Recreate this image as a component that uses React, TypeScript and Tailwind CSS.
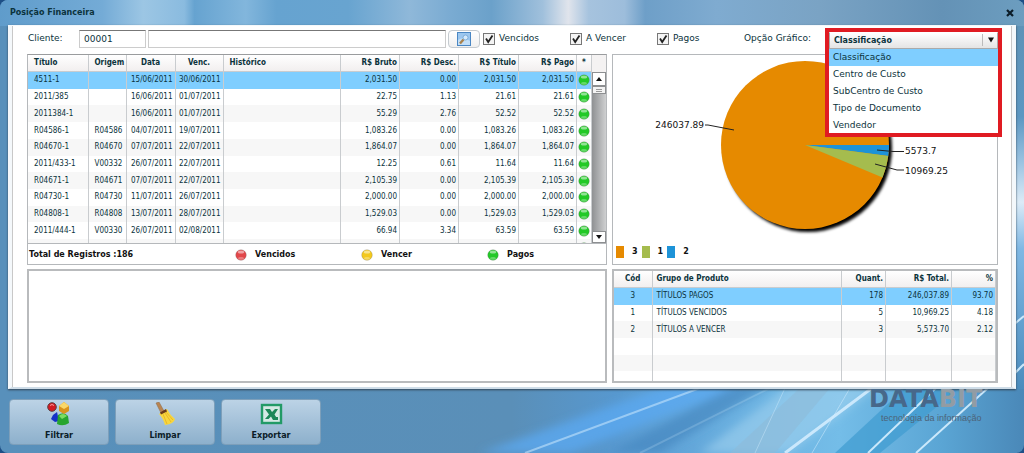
import { useState } from "react";

const titulos = [
  ["4511-1", "", "15/06/2011", "30/06/2011", "2,031.50", "0.00", "2,031.50", "2,031.50"],
  ["2011/385", "", "16/06/2011", "01/07/2011", "22.75", "1.13", "21.61", "21.61"],
  ["2011384-1", "", "16/06/2011", "01/07/2011", "55.29", "2.76", "52.52", "52.52"],
  ["R04586-1", "R04586", "04/07/2011", "19/07/2011", "1,083.26", "0.00", "1,083.26", "1,083.26"],
  ["R04670-1", "R04670", "07/07/2011", "22/07/2011", "1,864.07", "0.00", "1,864.07", "1,864.07"],
  ["2011/433-1", "V00332", "26/07/2011", "22/07/2011", "12.25", "0.61", "11.64", "11.64"],
  ["R04671-1", "R04671", "07/07/2011", "22/07/2011", "2,105.39", "0.00", "2,105.39", "2,105.39"],
  ["R04730-1", "R04730", "11/07/2011", "26/07/2011", "2,000.00", "0.00", "2,000.00", "2,000.00"],
  ["R04808-1", "R04808", "13/07/2011", "28/07/2011", "1,529.03", "0.00", "1,529.03", "1,529.03"],
  ["2011/444-1", "V00330", "26/07/2011", "02/08/2011", "66.94", "3.34", "63.59", "63.59"],
  ["", "", "", "", "", "", "", ""],
];

const grupos = [
  ["3", "TÍTULOS PAGOS", "178", "246,037.89", "93.70"],
  ["1", "TÍTULOS VENCIDOS", "5", "10,969.25", "4.18"],
  ["2", "TÍTULOS A VENCER", "3", "5,573.70", "2.12"],
  ["", "", "", "", ""],
  ["", "", "", "", ""],
  ["", "", "", "", ""],
];

const opcoes = ["Classificação", "Centro de Custo", "SubCentro de Custo", "Tipo de Documento", "Vendedor"];

const rowColor = (i: number) => {
  if (i === 0) return "bg-[#7fceff]";
  return i % 2 === 0 ? "bg-[#f7f7f7]" : "bg-white";
};

const Background = () => (
  <svg className="absolute inset-0 h-full w-full" viewBox="0 0 1024 453" preserveAspectRatio="none" aria-hidden="true">
    <defs>
      <linearGradient id="bar" x1="0" x2="1" y1="0" y2="0">
        <stop offset="0" stopColor="#5f9ccb" />
        <stop offset="0.1" stopColor="#74abd6" />
        <stop offset="0.14" stopColor="#9cc6e4" />
        <stop offset="0.18" stopColor="#8abbdf" />
        <stop offset="0.19" stopColor="#66a3d0" />
        <stop offset="0.24" stopColor="#82b6dc" />
        <stop offset="0.27" stopColor="#66a3d0" />
        <stop offset="0.34" stopColor="#68a4d0" />
        <stop offset="0.4" stopColor="#8fb8d9" />
        <stop offset="0.44" stopColor="#7aabd2" />
        <stop offset="0.48" stopColor="#6ba1ca" />
        <stop offset="0.53" stopColor="#a0c0dc" />
        <stop offset="0.555" stopColor="#e0e4ec" />
        <stop offset="0.575" stopColor="#a6c3de" />
        <stop offset="0.61" stopColor="#9dbddb" />
        <stop offset="0.63" stopColor="#6e9fc8" />
        <stop offset="0.7" stopColor="#7fabd0" />
        <stop offset="0.8" stopColor="#7aa3c4" />
        <stop offset="0.92" stopColor="#6492b6" />
        <stop offset="1" stopColor="#6c9dbf" />
      </linearGradient>
      <linearGradient id="floor" x1="0" x2="1" y1="0" y2="0">
        <stop offset="0" stopColor="#5890bb" />
        <stop offset="0.5" stopColor="#5a8fb8" />
        <stop offset="0.6" stopColor="#5798cf" />
        <stop offset="0.72" stopColor="#6ab0e0" />
        <stop offset="0.82" stopColor="#74bde8" />
        <stop offset="0.92" stopColor="#5aa5d4" />
        <stop offset="1" stopColor="#4a88b8" />
      </linearGradient>
      <linearGradient id="side" x1="0" x2="0" y1="0" y2="1">
        <stop offset="0" stopColor="#5f92b5" />
        <stop offset="0.3" stopColor="#5c97c2" />
        <stop offset="0.42" stopColor="#9cc4e2" />
        <stop offset="0.52" stopColor="#dcebf7" />
        <stop offset="0.64" stopColor="#7fb8e4" />
        <stop offset="1" stopColor="#4b8cbd" />
      </linearGradient>
      <filter id="soft">
        <feGaussianBlur stdDeviation="4" />
      </filter>
    </defs>
    <rect width="1024" height="453" fill="url(#floor)" />
    <rect x="1008" width="16" height="389" fill="url(#side)" />
    <rect width="1024" height="26" fill="url(#bar)" />
    <g filter="url(#soft)">
      <path d="M480 453L670 385H745L570 453Z" fill="#5ba9f2" opacity="0.75" />
      <path d="M610 453L735 385H770L660 453Z" fill="#4788c0" opacity="0.7" />
      <path d="M700 453L790 385H880L790 453Z" fill="#9fd0ee" opacity="0.6" />
    </g>
    <path d="M730 453L800 388H830L775 453Z" fill="#8dbad8" opacity="0.6" />
    <path d="M835 453L905 388H960L880 453Z" fill="#3f9bd0" opacity="0.7" />
    <g stroke="#d7efff" fill="none">
      <path d="M525 453L700 388" strokeWidth="2" opacity="0.5" />
      <path d="M640 453L770 388" strokeWidth="2" opacity="0.2" />
      <path d="M755 453L785 388" opacity="0.4" />
      <path d="M785 453L872 388" strokeWidth="3" opacity="0.85" />
      <path d="M812 453L850 388" opacity="0.5" />
      <path d="M868 453L936 388" strokeWidth="2" opacity="0.9" />
      <path d="M916 453L988 388" strokeWidth="2" opacity="0.9" />
      <path d="M1012 326L1024 316" strokeWidth="2" opacity="0.9" />
      <path d="M1012 376L1024 364" strokeWidth="2" opacity="0.9" />
    </g>
  </svg>
);

const Ball = ({ color }: { color: "red" | "yellow" | "green" }) => {
  const fill = { red: "#e2474a", yellow: "#f3c91d", green: "#22c926" }[color];
  return (
    <svg className="block h-3 w-3" viewBox="0 0 12 12" aria-hidden="true">
      <circle cx="6" cy="6" r="5.3" fill={fill} stroke="#777" strokeOpacity="0.5" strokeWidth="0.6" />
      <ellipse cx="6" cy="3" rx="3.2" ry="1.6" fill="#fff" opacity="0.5" />
      <ellipse cx="6" cy="9.4" rx="3" ry="1.4" fill="#fff" opacity="0.3" />
    </svg>
  );
};

const FilterIcon = () => (
  <svg className="h-6 w-6" viewBox="0 0 24 24" aria-hidden="true">
    <path d="M6 13L10 10L12 19L8 20L4 17Z" fill="#1532c8" />
    <path d="M11 13Q17 9 21 14L22 21Q16 25 10 22Z" fill="#27a52f" />
    <path d="M12 14Q16 10 20 14L15 17Z" fill="#7bdc62" />
    <circle cx="5" cy="5" r="4.3" fill="#d31b22" stroke="#5d4143" />
    <path d="M3 3.500Q5 1.500 7 3.500" stroke="#f8a0a0" fill="none" />
    <path d="M17 0L22 4V9L17 12L12 9V4Z" fill="#d9931c" />
    <path d="M17 0L22 4L17 7L12 4Z" fill="#f9d76a" />
  </svg>
);

const BroomIcon = () => (
  <svg className="h-6 w-6" viewBox="0 0 24 24" aria-hidden="true">
    <path d="M3 1L6 0L11 9L8 11Z" fill="#b98450" stroke="#8a6a4c" strokeWidth="0.5" />
    <path d="M6 12L14 7Q17 13 22 17Q21 22 12 23Q10 16 6 12Z" fill="#f8d63e" />
    <path d="M10 12L14 22M12 11L18 20M13 10L20 18" stroke="#e3ab22" strokeWidth="0.7" />
    <path d="M7 10.500L13 7L14 9.500L8 12.500Z" fill="#6a3a1a" />
  </svg>
);

const ExcelIcon = () => (
  <svg className="h-6 w-6" viewBox="0 0 24 24" aria-hidden="true">
    <rect x="3" y="3" width="19" height="18" fill="#d5e9e4" stroke="#229a66" strokeWidth="2.400" />
    <path d="M6 7H11L13 10L16 7H19L15.500 12.500L19 18H14L12 14.500L9.500 17H6L10 12.500Z" fill="#1d8758" />
    <path d="M15 15H19V18H15Z" fill="#1d8758" />
  </svg>
);

const Check = ({ label }: { label: string }) => {
  const [on, setOn] = useState(true);
  return (
    <label className="flex w-[87px] shrink-0 items-center gap-1">
      <span className="relative block h-3 w-3">
        <input
          type="checkbox"
          checked={on}
          onChange={() => setOn(!on)}
          className="block h-3 w-3 appearance-none border border-[#777] bg-[#f4f4f4]"
        />
        {on && (
          <svg className="pointer-events-none absolute inset-0 h-3 w-3" viewBox="0 0 12 12" aria-hidden="true">
            <path d="M3 5.500L5.200 9L9.500 2.500" fill="none" stroke="#222" strokeWidth="1.800" />
          </svg>
        )}
      </span>
      {label}
    </label>
  );
};

const TitulosTable = () => (
  <div className="flex h-[190px] overflow-hidden border border-[#b5b8bb] border-t-[#9a9c9e]">
    <div className="h-full min-w-0 flex-1 overflow-hidden">
      <table className="h-[201px] w-full table-fixed border-collapse font-['DejaVu_Sans_Condensed','DejaVu_Sans',sans-serif] text-[8px] leading-4">
        <colgroup>
          <col className="w-[60px]" />
          <col className="w-[38px]" />
          <col className="w-[49px]" />
          <col className="w-[48px]" />
          <col />
          <col className="w-[59px]" />
          <col className="w-[59px]" />
          <col className="w-[60px]" />
          <col className="w-[58px]" />
          <col className="w-[15px]" />
        </colgroup>
        <thead>
          <tr className="h-4 bg-linear-to-b from-white to-[#f1eeee] [&>th]:border-r [&>th]:border-b [&>th]:border-[#c9cccf] [&>th]:p-0">
            <th className="pl-1.5! text-left">Título</th>
            <th className="pl-1.5! text-left">Origem</th>
            <th>Data</th>
            <th>Venc.</th>
            <th className="pl-1.5! text-left">Histórico</th>
            <th className="pr-0.5! text-right">R$ Bruto</th>
            <th className="pr-0.5! text-right">R$ Desc.</th>
            <th className="pr-0.5! text-right">R$ Título</th>
            <th className="pr-0.5! text-right">R$ Pago</th>
            <th>*</th>
          </tr>
        </thead>
        <tbody>
          {titulos.map((t, i) => (
            <tr key={i} className={`${rowColor(i)} h-4 [&>td]:border-r [&>td]:border-[#c9cccf] [&>td]:p-0`}>
              <td className="pl-1.5!">{t[0]}</td>
              <td className="pl-1.5!">{t[1]}</td>
              <td className="pr-0.5! text-right">{t[2]}</td>
              <td className="pr-0.5! text-right">{t[3]}</td>
              <td></td>
              <td className="pr-0.5! text-right">{t[4]}</td>
              <td className="pr-0.5! text-right">{t[5]}</td>
              <td className="pr-0.5! text-right">{t[6]}</td>
              <td className="pr-0.5! text-right">{t[7]}</td>
              <td className="pl-px!"><Ball color="green" /></td>
            </tr>
          ))}
        </tbody>
      </table>
    </div>
    <div className="flex w-3.5 flex-col">
      <div className="h-[17px] bg-[#f4f2f2]"></div>
      <button aria-label="Subir" className="flex h-3.5 items-center justify-center border border-[#8d8f91] bg-white">
        <svg className="h-1 w-1.5" viewBox="0 0 6 4"><path d="M0 4L3 0L6 4Z" fill="#111" /></svg>
      </button>
      <div className="flex-1 bg-linear-to-r from-[#8f9193] to-[#cfd0d1]">
        <div className="flex h-2 flex-col items-center justify-center gap-px border border-[#8d8f91] bg-[#f3f3f3]">
          <span className="h-px w-1.5 bg-[#999]"></span>
          <span className="h-px w-1.5 bg-[#999]"></span>
        </div>
      </div>
      <button aria-label="Descer" className="flex h-3 items-center justify-center border border-[#8d8f91] bg-white">
        <svg className="h-1 w-1.5" viewBox="0 0 6 4"><path d="M0 0L3 4L6 0Z" fill="#111" /></svg>
      </button>
    </div>
  </div>
);

const GruposTable = () => (
  <div className="h-[114px] overflow-hidden border-2 border-[#b9bbbd]">
    <table className="h-[117px] w-full table-fixed border-collapse font-['DejaVu_Sans_Condensed','DejaVu_Sans',sans-serif] text-[8px] leading-4">
      <colgroup>
        <col className="w-[38px]" />
        <col />
        <col className="w-[44px]" />
        <col className="w-[66px]" />
        <col className="w-[44px]" />
      </colgroup>
      <thead>
        <tr className="h-4 bg-linear-to-b from-white to-[#f1eeee] [&>th]:border-r [&>th]:border-b [&>th]:border-[#c9cccf] [&>th]:p-0">
          <th>Cód</th>
          <th className="pl-1! text-left">Grupo de Produto</th>
          <th className="pr-0.5! text-right">Quant.</th>
          <th className="pr-0.5! text-right">R$ Total.</th>
          <th className="pr-0.5! text-right">%</th>
        </tr>
      </thead>
      <tbody>
        {grupos.map((g, i) => (
          <tr key={i} className={`${rowColor(i)} h-4 [&>td]:border-r [&>td]:border-[#c9cccf] [&>td]:p-0`}>
            <td className="text-center">{g[0]}</td>
            <td className="pl-1!">{g[1]}</td>
            <td className="pr-0.5! text-right">{g[2]}</td>
            <td className="pr-0.5! text-right">{g[3]}</td>
            <td className="pr-0.5! text-right">{g[4]}</td>
          </tr>
        ))}
      </tbody>
    </table>
  </div>
);

const PieChart = () => (
  <svg className="h-[189px] w-full" viewBox="0 0 384 189" role="img" aria-label="Gráfico por classificação">
    <defs>
      <filter id="shadow" x="-10%" y="-10%" width="120%" height="120%">
        <feGaussianBlur stdDeviation="1.500" />
      </filter>
    </defs>
    <circle cx="195" cy="93" r="84" fill="#000" filter="url(#shadow)" />
    <circle cx="192" cy="90" r="84" fill="#e68a00" />
    <path d="M192 90H276A84 84 0 0 1 275.300 101.100Z" fill="#1d93d8" />
    <path d="M192 90L275.300 101.100A84 84 0 0 1 269.500 122.500Z" fill="#a5bc4e" />
    <g stroke="#222" fill="none">
      <path d="M92 70H95L121 75" />
      <path d="M264 95L280 96.500H291" />
      <path d="M262 109L284 115H291" />
    </g>
    <g className="fill-[#111] text-[9px]">
      <text x="91" y="73" textAnchor="end">246037.89</text>
      <text x="292" y="99">5573.7</text>
      <text x="292" y="119">10969.25</text>
    </g>
  </svg>
);

const App = () => {
  const [opcao, setOpcao] = useState(opcoes[0]);

  return (
    <div className="min-h-screen bg-[#1d4f86] font-['DejaVu_Sans',Verdana,sans-serif] text-[9px] text-[#0b333c]">
      <div className="relative flex min-h-screen flex-col overflow-hidden rounded-lg">
        <Background />

        <header className="relative flex h-[25px] items-center justify-between px-2.5 text-[8px] font-bold">
          <h1>Posição Financeira</h1>
          <button aria-label="Fechar">
            <svg className="h-2 w-2" viewBox="0 0 8 8"><path d="M1 1L7 7M7 1L1 7" stroke="#0b1c28" strokeWidth="2.200" /></svg>
          </button>
        </header>

        <main className="relative mx-2 border-x-4 border-t border-b-2 border-[#f4f8fb] border-b-[#cfdde8] bg-white shadow-[0_1px_2px_#345]">
          <div className="border-x border-[#c8c8c8] pt-1 pr-[13px] pb-1 pl-3.5">
            {/* Filters */}
            <form className="flex h-[18px] items-center" onSubmit={(e) => e.preventDefault()}>
              <label htmlFor="cliente" className="w-[52px] shrink-0 pl-px">Cliente:</label>
              <input id="cliente" defaultValue="00001" className="h-[18px] w-[67px] border border-[#ccc] border-t-[#777] bg-white px-1" />
              <input aria-label="Nome do cliente" className="ml-0.5 h-[18px] min-w-0 flex-1 border border-[#ccc] border-t-[#777] bg-white px-1" />
              <button aria-label="Pesquisar" className="mr-[3px] ml-0.5 flex h-[18px] w-8 items-center justify-center rounded-sm border border-[#c5cbd0] bg-linear-to-b from-white to-[#f0f0f0]">
                <svg className="h-3.5 w-3.5" viewBox="0 0 14 14" aria-hidden="true">
                  <rect x="0.500" y="0.500" width="13" height="13" fill="#9cc7ef" stroke="#4a87c4" />
                  <path d="M1 8Q6 4 13 9V13H1Z" fill="#c3dff7" />
                  <circle cx="8.500" cy="5.500" r="2.500" fill="#d5eafc" stroke="#6fa2d2" strokeWidth="0.8" />
                  <path d="M6.500 7.500L3 11.500" stroke="#a9824c" strokeWidth="2.400" />
                </svg>
              </button>
              <Check label="Vencidos" />
              <Check label="A Vencer" />
              <Check label="Pagos" />
              <label htmlFor="opcao" className="w-[85px] shrink-0">Opção Gráfico:</label>
              <div className="relative h-[18px] w-[169px] shrink-0">
                <div className="absolute -inset-x-1 -top-0.5 z-10 h-[109px] border-4 border-[#e01b22] bg-white">
                  <div className="relative">
                    <select
                      id="opcao"
                      value={opcao}
                      onChange={(e) => setOpcao(e.target.value)}
                      className="block h-[17px] w-full appearance-none border border-[#aaa] border-t-white bg-linear-to-b from-white to-[#e4e4e4] px-1 text-[8px] font-bold"
                    >
                      {opcoes.map((o) => <option key={o}>{o}</option>)}
                    </select>
                    <span className="pointer-events-none absolute top-0.5 right-0 flex h-3 w-4 items-center justify-center border-l border-[#bbb]">
                      <svg className="h-1.5 w-1.5" viewBox="0 0 6 6"><path d="M0 0.500L3 5.500L6 0.500Z" fill="#111" /></svg>
                    </span>
                  </div>
                  <ul className="h-[84px] overflow-hidden">
                    {opcoes.map((o) => (
                      <li
                        key={o}
                        onClick={() => setOpcao(o)}
                        className={`h-[17px] px-1 leading-[17px] ${o === opcao ? "bg-[#7fceff]" : "bg-white"}`}
                      >
                        {o}
                      </li>
                    ))}
                  </ul>
                </div>
              </div>
            </form>

            <div className="mt-1.5 grid grid-cols-[580fr_386fr] gap-x-[5px] gap-y-1">
              <section className="flex flex-col">
                <TitulosTable />
                <div className="flex h-[21px] items-center border border-t-0 border-[#b5b8bb] px-px pt-0.5 text-[8px] font-bold text-[#111]">
                  <span className="flex-1">Total de Registros :186</span>
                  <span className="flex w-[126px] items-center gap-2"><Ball color="red" />Vencidos</span>
                  <span className="flex w-[126px] items-center gap-2"><Ball color="yellow" />Vencer</span>
                  <span className="flex w-[118px] items-center gap-2"><Ball color="green" />Pagos</span>
                </div>
              </section>

              <section className="border border-[#b5b8bb]">
                <PieChart />
                <ul className="flex gap-1 px-[3px] pt-0.5 text-[8px] font-bold text-[#111]">
                  <li className="flex items-center gap-2"><span className="h-3 w-2 bg-[#e68a00]"></span>3</li>
                  <li className="flex items-center gap-2"><span className="h-3 w-2 bg-[#a5bc4e]"></span>1</li>
                  <li className="flex items-center gap-2"><span className="h-3 w-2 bg-[#1d93d8]"></span>2</li>
                </ul>
              </section>

              <section className="border-2 border-[#b9bbbd]"></section>
              <GruposTable />
            </div>
          </div>
        </main>

        <footer className="relative flex items-start justify-between px-[9px] pb-2">
          <div className="flex gap-1.5 pt-2.5 text-[8px] font-bold text-[#0b1c28]">
            <button className="flex h-[46px] w-[100px] flex-col items-center gap-1 rounded-sm border border-[#7d9fba] bg-linear-to-b from-[#bcd3e6] to-[#8db0cc] pt-0.5">
              <FilterIcon />
              Filtrar
            </button>
            <button className="flex h-[46px] w-[100px] flex-col items-center gap-1 rounded-sm border border-[#7d9fba] bg-linear-to-b from-[#bcd3e6] to-[#8db0cc] pt-0.5">
              <BroomIcon />
              Limpar
            </button>
            <button className="flex h-[46px] w-[100px] flex-col items-center gap-1 rounded-sm border border-[#7d9fba] bg-linear-to-b from-[#bcd3e6] to-[#8db0cc] pt-0.5">
              <ExcelIcon />
              Exportar
            </button>
          </div>
          <div className="w-[146px]">
            <div className="text-2xl leading-5 font-bold text-[#47688a]">
              DATA<span className="text-[#929ca4]">BIT</span>
            </div>
            <div className="pt-[3px] pl-3 font-['Liberation_Sans',Arial,sans-serif] text-[9px] leading-3 text-[#4c6378]">tecnologia da informação</div>
          </div>
        </footer>
      </div>
    </div>
  );
};

export default App;
